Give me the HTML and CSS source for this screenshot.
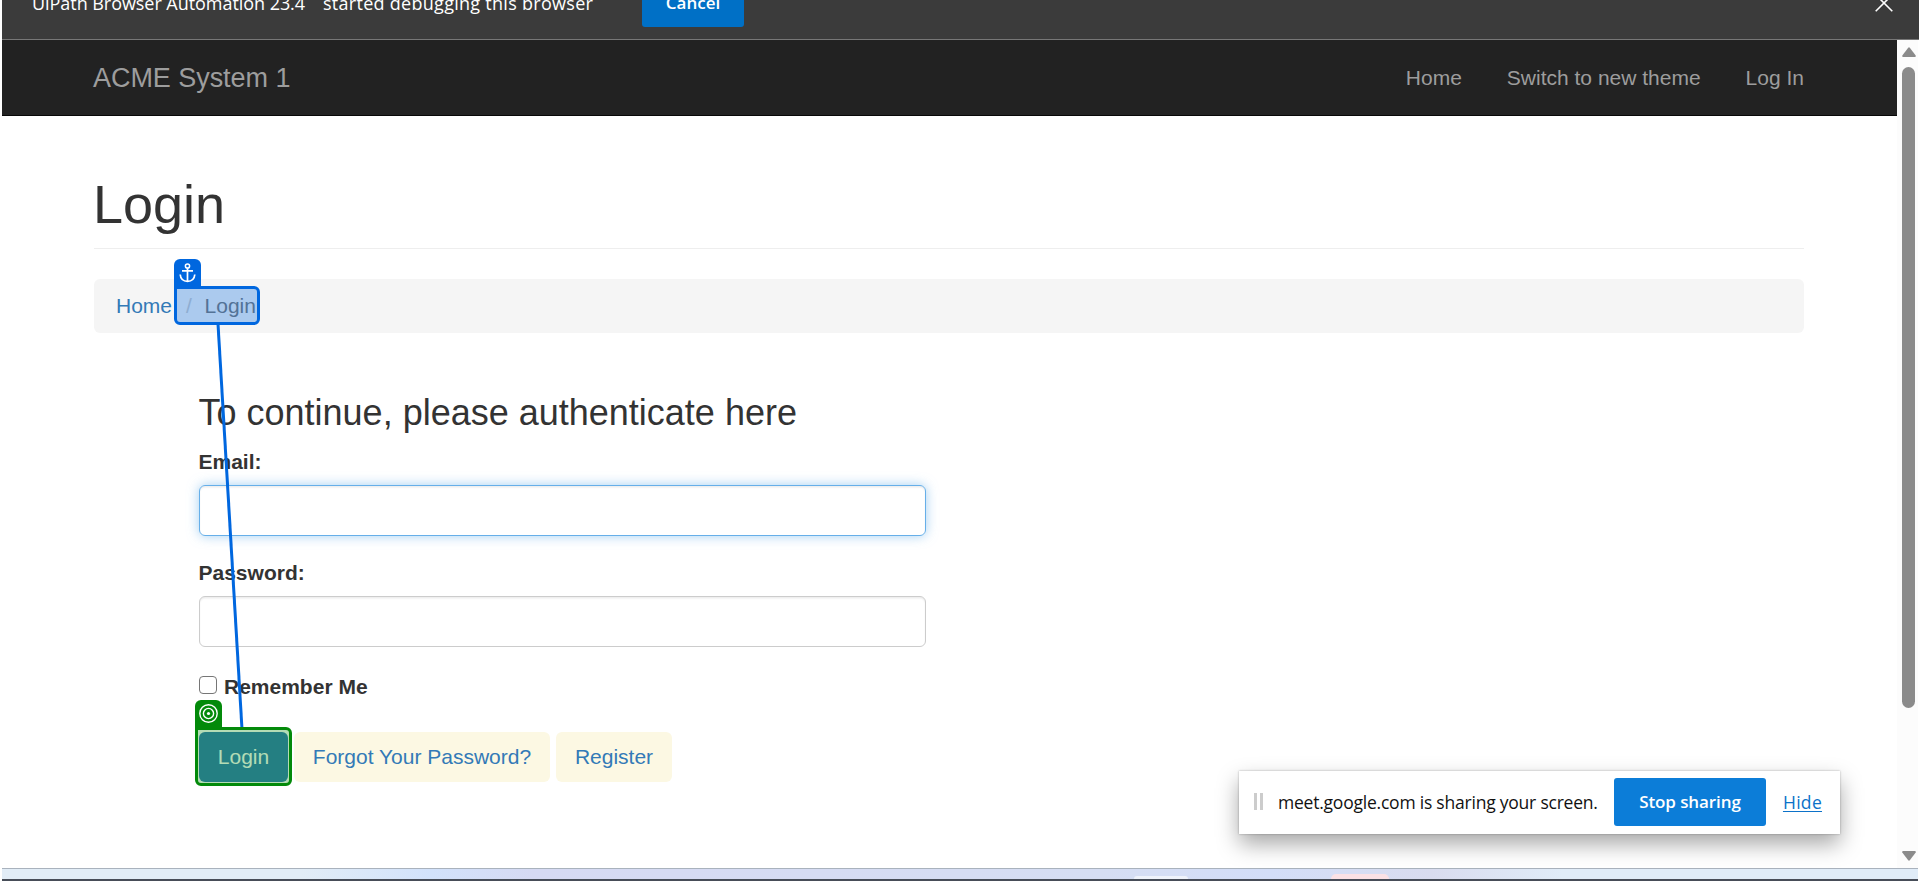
FILE: index.html
```html
<!DOCTYPE html>
<html lang="en">
<head>
<meta charset="utf-8">
<title>ACME System 1 - Login</title>
<link rel="stylesheet" href="styles.css">
</head>
<body>
<div class="window">
  <div class="infobar">
    <span class="infobar-text"><span class="client">UiPath Browser Automation 23.4</span><span class="status">started debugging this browser</span></span>
    <button class="infobar-cancel">Cancel</button>
    <svg class="infobar-close" width="18" height="18" viewBox="0 0 18 18"><path d="M.7.7l16.6 16.6M17.3.7L.7 17.3" stroke="#fff" stroke-width="1.6"/></svg>
  </div>
  <div class="viewport">
    <div class="page">
      <nav class="navbar">
        <a class="brand">ACME System 1</a>
        <div class="links"><a>Home</a><a>Switch to new theme</a><a>Log In</a></div>
      </nav>
      <main class="container">
        <h1 class="title">Login</h1>
        <div class="breadcrumb"><a>Home</a><span class="slash">/</span><span class="current">Login</span></div>
        <form class="form">
          <h3 class="prompt">To continue, please authenticate here</h3>
          <label class="label">Email:</label>
          <div class="input focused"></div>
          <label class="label second">Password:</label>
          <div class="input"></div>
          <div class="remember"><span class="check"></span><b>Remember Me</b></div>
          <div class="actions"><a class="btn primary">Login</a><a class="btn forgot">Forgot Your Password?</a><a class="btn register">Register</a></div>
        </form>
      </main>
    </div>
    <div class="scrollbar">
      <svg width="14" height="10" viewBox="0 0 14 10"><path d="M6 .9Q7-.3 8 .9L13.7 8.600Q14 10 13 10H1Q0 10 .3 8.600Z" fill="#8b8b8b"/></svg>
      <div class="thumb"></div>
      <svg class="down" width="14" height="10" viewBox="0 0 14 10"><path d="M6 9.100Q7 10.300 8 9.100L13.700 1.400Q14 0 13 0H1Q0 0 .3 1.400Z" fill="#8b8b8b"/></svg>
    </div>
  </div>
  <div class="taskbar"><span class="task white"></span><span class="task pink"></span></div>
</div>

<svg class="connector" width="40" height="408" viewBox="0 0 40 408"><path d="M8 0L32 405" stroke="#0067df" stroke-width="3" fill="none"/></svg>
<div class="marker anchor">
  <div class="tab"><svg width="17" height="20" viewBox="0 0 17 20" fill="none" stroke="#fff"><circle cx="8.500" cy="3" r="2.100" stroke-width="1.500"/><path d="M8.500 5v13M3 7.800h11" stroke-width="1.700"/><path d="M1.200 11.500Q1.800 18.300 8.500 18.300T15.800 11.500" stroke-width="1.700"/></svg></div>
  <div class="frame"></div>
</div>
<div class="marker target">
  <div class="tab"><svg width="19" height="19" viewBox="0 0 19 19" fill="none" stroke="#fff" stroke-width="1.400"><circle cx="9.500" cy="9.500" r="8.700"/><circle cx="9.500" cy="9.500" r="5.100"/><circle cx="9.500" cy="9.500" r="1.600" fill="#fff" stroke="none"/></svg></div>
  <div class="frame"></div>
</div>

<div class="share">
  <span class="grip"></span>
  <span class="share-text">meet.google.com is sharing your screen.</span>
  <button class="stop">Stop sharing</button>
  <a class="hide">Hide</a>
</div>
</body>
</html>
```
FILE: styles.css
```css
* { box-sizing: border-box; }
body { margin: 0; width: 1920px; height: 881px; overflow: hidden; background: #fff; font: 21px/30px "Liberation Sans", Arial, sans-serif; color: #333; }
h1, h3 { margin: 0; font-weight: 400; }
button { border: 0; padding: 0; }
.window { display: flex; flex-direction: column; height: 881px; padding: 0 2px; }
.infobar { display: flex; align-items: flex-end; flex: none; width: 1917px; height: 40px; overflow: hidden; background: #3b3b3b; border-bottom: 1px solid #777; color: #fff; font: 18px/24px "Open Sans", "Noto Sans", sans-serif; }
.infobar-text { display: flex; width: 564px; margin: 0 0 24px 30px; white-space: pre; }
.client { width: 291px; letter-spacing: -.05px; }
.status { letter-spacing: .28px; }
.infobar-cancel { flex: none; width: 102px; height: 48px; margin: 0 0 12px 46px; border-radius: 3px; background: #0070c6; color: #fff; font: 600 17px/24px "Open Sans", sans-serif; }
.infobar-close { margin: 0 26px 27px auto; flex: none; }
.viewport { display: flex; height: 828px; }
.page { width: 1895px; }
.navbar { display: flex; justify-content: space-between; align-items: center; height: 76px; padding: 0 93px 0 91px; background: #222; border-bottom: 1px solid #080808; color: #9d9d9d; }
.brand { font-size: 27px; letter-spacing: -.05px; }
.links { display: flex; gap: 45px; }
.container { padding: 54px 93px 0 92px; }
.title { height: 79px; font-size: 54px; line-height: 69px; text-indent: -1px; border-bottom: 1px solid #eee; }
.breadcrumb { display: flex; align-items: center; height: 54px; margin-top: 30px; padding-left: 22px; border-radius: 6px; background: #f5f5f5; }
.breadcrumb a { color: #337ab7; }
.slash { width: 18.500px; margin-left: 14px; color: #ccc; }
.current { color: #777; }
.form { width: 727px; margin: 60px 0 0 105px; }
.prompt { height: 40px; font-size: 36px; line-height: 40px; text-indent: -.5px; white-space: nowrap; }
.label { display: block; height: 30px; margin: 14px 0 8px; font-weight: 700; text-indent: -.5px; }
.label.second { margin-top: 22px; margin-bottom: 8px; }
.input { height: 51px; border: 1px solid #ccc; border-radius: 6px; box-shadow: inset 0 1.5px 1.5px rgba(0,0,0,.075); }
.focused { border-color: #66afe9; box-shadow: inset 0 1.5px 1.5px rgba(0,0,0,.075), 0 0 12px rgba(102,175,233,.6); }
.remember { display: flex; height: 30px; margin-top: 25px; }
.check { width: 18px; height: 18px; margin: 4px 7px 0 0; border: 1.500px solid #767676; border-radius: 4px; }
.actions { display: flex; margin-top: 30px; }
.btn { display: flex; justify-content: center; align-items: center; height: 50px; padding-bottom: 1px; border-radius: 6px; background: #fcf8e3; color: #337ab7; white-space: nowrap; }
.primary { width: 89px; background: #337ab7; color: #fff; }
.forgot { width: 256px; margin-left: 6px; }
.register { width: 116px; margin-left: 6px; }
.scrollbar { display: flex; flex-direction: column; align-items: center; width: 21px; padding: 7px 0 7px 2px; background: #fcfcfc; }
.thumb { width: 13px; height: 641px; margin-top: 10px; border-radius: 7px; background: #8b8b8b; }
.down { margin-top: auto; }
.taskbar { position: relative; height: 13px; border-top: 1px solid #a9b2bd; border-bottom: 2px solid #474d58; background: linear-gradient(90deg, #e2edf7 0, #e2edf7 300px, #d2e2fb 430px, #d6daf3 530px, #d6def3 1100px, #d3def8 1270px, #d9dcef 1430px, #e0ecf8 1560px, #e0ecf8); }
.task { position: absolute; bottom: 0; border-radius: 6px 6px 0 0; }
.task.white { left: 1132px; width: 54px; height: 3px; background: #eff3fb; }
.task.pink { left: 1329px; width: 58px; height: 5px; background: #fbe1e5; }
.connector { position: absolute; left: 210px; top: 324px; }
.marker { position: absolute; }
.tab { display: flex; justify-content: center; width: 27px; height: 27px; border-radius: 6px 6px 0 0; }
.anchor { left: 174px; top: 259px; }
.anchor .tab { padding-top: 4px; background: #0067df; }
.anchor .frame { width: 86px; height: 39px; border: 3px solid #0067df; border-radius: 0 6px 6px 6px; background: rgba(0,103,223,.3); }
.target { left: 195px; top: 700px; }
.target .tab { padding-top: 4px; background: #038a0a; }
.target .frame { width: 97px; height: 59px; border: 3px solid #038a0a; border-radius: 0 6px 6px 6px; background: rgba(3,138,10,.3); }
.share { position: absolute; left: 1239px; top: 771px; display: flex; align-items: center; width: 601px; height: 63px; padding: 0 18px 2px 15px; background: #fff; color: #111; box-shadow: 0 0 2px rgba(0,0,0,.3), 0 10px 22px rgba(0,0,0,.35); font: 17.500px/24px "Open Sans", sans-serif; white-space: nowrap; }
.grip { width: 9px; height: 17px; border: solid #ccc; border-width: 0 3px; }
.share-text { width: 321px; margin-left: 15px; letter-spacing: -.22px; }
.stop { width: 152px; height: 48px; margin: 0 17px 0 15px; border-radius: 3px; background: #0c7dd8; color: #fff; font: 600 17px/24px "Open Sans", sans-serif; letter-spacing: -.1px; }
.hide { color: #0c72c9; letter-spacing: .3px; text-decoration: underline; text-underline-offset: 2px; }
```
